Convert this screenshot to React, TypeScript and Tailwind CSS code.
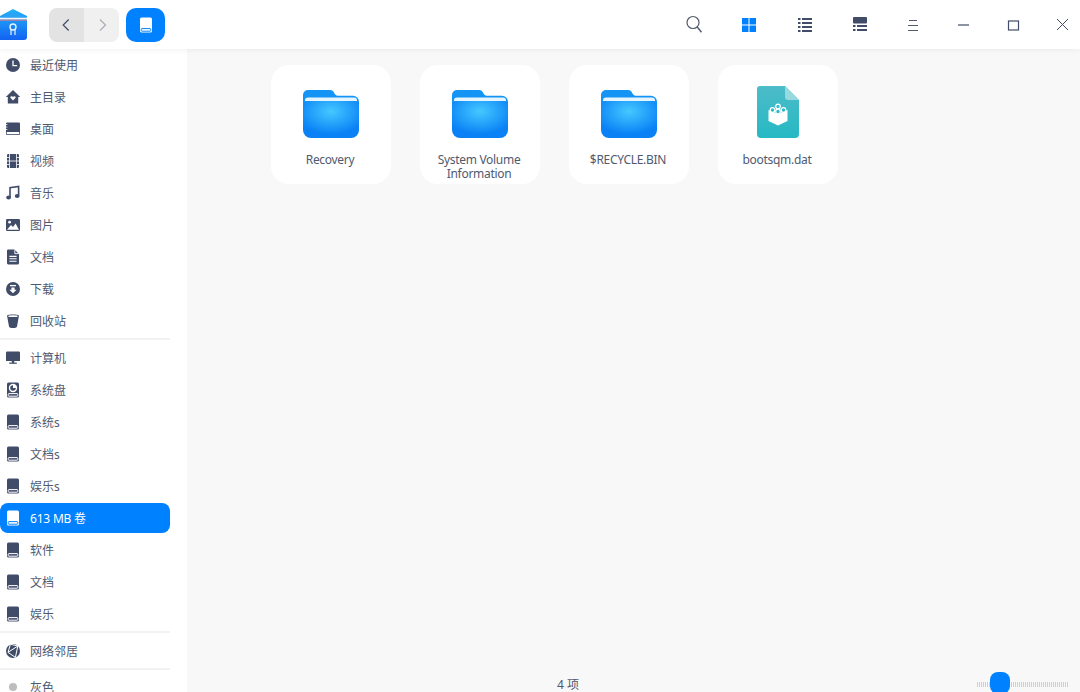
import type { ReactNode } from 'react';

const font = { fontFamily: '"Noto Sans", "Noto Sans CJK SC", sans-serif' };

function Icon({ children, className = '' }: { children: ReactNode; className?: string }) {
  return (
    <svg width="16" height="16" viewBox="0 0 16 16" className={`shrink-0 ${className}`}>
      {children}
    </svg>
  );
}

// cut = colour of the details punched out of the glyph
function DriveIcon({ fill = '#414d68', cut = '#ffffff' }: { fill?: string; cut?: string }) {
  return (
    <Icon>
      <path d="M3.5 .5h9a1.5 1.5 0 0 1 1.5 1.5v12a1.5 1.5 0 0 1-1.5 1.5h-9A1.5 1.5 0 0 1 2 14V2A1.5 1.5 0 0 1 3.5 .5z" fill={fill} />
      <rect x="3.2" y="11.6" width="9.6" height="2.6" rx=".8" fill={fill} stroke={cut} strokeWidth="1" />
    </Icon>
  );
}

const c = '#414d68';

const icons: Record<string, ReactNode> = {
  recent: (
    <Icon>
      <circle cx="8" cy="8" r="7" fill={c} />
      <path d="M8 3.6V8.6h4.2" fill="none" stroke="#fff" strokeWidth="1.3" />
    </Icon>
  ),
  home: (
    <Icon>
      <path d="M8 1 15.2 8H13.2V14.6H2.8V8H.8z" fill={c} />
      <path d="M8 11.4 5.6 9c-1-1.2.8-2.6 2.4-1.2 1.6-1.4 3.4 0 2.4 1.2z" fill="#fff" />
    </Icon>
  ),
  desktop: (
    <Icon>
      <rect x="1" y="1.5" width="14" height="12.5" rx="1" fill={c} />
      <path d="M1 3.5h1.4M1 6h1.4M1 8.5h1.4" stroke="#fff" strokeWidth=".8" />
      <rect x="1.8" y="11" width="12.4" height="2.2" fill="#fff" />
    </Icon>
  ),
  video: (
    <Icon>
      <rect x="2" y="1" width="12" height="14" rx="1.2" fill={c} />
      <path d="M4.5 1v14M11.5 1v14" stroke="#fff" strokeWidth=".8" />
      <path d="M2 4.5h2.5M2 8h2.5M2 11.5h2.5M11.5 4.5H14M11.5 8H14M11.5 11.5H14M4.5 8h7" stroke="#fff" strokeWidth=".8" />
    </Icon>
  ),
  music: (
    <Icon>
      <path d="M5 12V2.6L13.6 1.5V10.5" fill="none" stroke={c} strokeWidth="1.6" />
      <ellipse cx="3.6" cy="12.6" rx="2.4" ry="2" fill={c} />
      <ellipse cx="12.2" cy="11" rx="2.4" ry="2" fill={c} />
    </Icon>
  ),
  image: (
    <Icon>
      <rect x="1" y="2" width="14" height="12" rx="1.2" fill={c} />
      <circle cx="4.6" cy="5.2" r="1.4" fill="#fff" />
      <path d="M2 12.8 6 8l2 2 2.6-3.4 3.4 6.2z" fill="#fff" />
    </Icon>
  ),
  docs: (
    <Icon>
      <path d="M3.2 .5H9.5L14 5V14a1.5 1.5 0 0 1-1.5 1.5h-9.3A1.5 1.5 0 0 1 2 14V1.7A1.2 1.2 0 0 1 3.2 .5z" fill={c} />
      <path d="M9.8 .6V4.6H13.8" fill="none" stroke="#fff" strokeWidth=".9" />
      <path d="M4.4 7.4h7.2M4.4 9.8h7.2M4.4 12.2h7.2" stroke="#fff" strokeWidth="1.1" />
    </Icon>
  ),
  download: (
    <Icon>
      <circle cx="8" cy="8" r="7" fill={c} />
      <path d="M5 4.6h6" stroke="#fff" strokeWidth="1.3" />
      <path d="M6.4 6.6h3.2v2.2h2L8 12.2 4.4 8.8h2z" fill="#fff" />
    </Icon>
  ),
  trash: (
    <Icon>
      <path d="M2 2.6C2 1 14 1 14 2.6L12 13.4C11.6 15.6 4.4 15.6 4 13.4z" fill={c} />
      <ellipse cx="8" cy="3.2" rx="4.8" ry=".9" fill="#fff" />
    </Icon>
  ),
  computer: (
    <Icon>
      <path d="M2.2 1.5h11.6A1.2 1.2 0 0 1 15 2.7V11H1V2.7A1.2 1.2 0 0 1 2.2 1.5z" fill={c} />
      <rect x="6.8" y="11" width="2.4" height="2" fill={c} />
      <rect x="4.2" y="12.6" width="7.6" height="1.2" fill={c} />
    </Icon>
  ),
  system: (
    <Icon>
      <rect x="2" y=".5" width="12" height="15" rx="1.5" fill={c} />
      <circle cx="8" cy="6" r="4.2" fill="#fff" />
      <path d="M8 3.2a2.8 2.8 0 1 0 2.8 2.8H8z" fill={c} />
      <rect x="3.2" y="11.6" width="9.6" height="2.6" rx=".8" fill={c} stroke="#fff" strokeWidth="1" />
    </Icon>
  ),
  network: (
    <Icon>
      <circle cx="8" cy="8" r="7" fill={c} />
      <path d="M5.4 1.2 3 9.4l7.4 5M3 9.4 12.8 3 10.4 14.4M5.4 1.2 12.8 3" fill="none" stroke="#fff" strokeWidth="1" />
    </Icon>
  ),
  gray: (
    <Icon>
      <circle cx="8" cy="8" r="4" fill="#bdbdbd" />
    </Icon>
  ),
};

type Item = { label: string; icon: string; active?: boolean };

const groupOne: Item[] = [
  { label: '最近使用', icon: 'recent' },
  { label: '主目录', icon: 'home' },
  { label: '桌面', icon: 'desktop' },
  { label: '视频', icon: 'video' },
  { label: '音乐', icon: 'music' },
  { label: '图片', icon: 'image' },
  { label: '文档', icon: 'docs' },
  { label: '下载', icon: 'download' },
  { label: '回收站', icon: 'trash' },
];

const groupTwo: Item[] = [
  { label: '计算机', icon: 'computer' },
  { label: '系统盘', icon: 'system' },
  { label: '系统s', icon: 'drive' },
  { label: '文档s', icon: 'drive' },
  { label: '娱乐s', icon: 'drive' },
  { label: '613 MB 卷', icon: 'drive', active: true },
  { label: '软件', icon: 'drive' },
  { label: '文档', icon: 'drive' },
  { label: '娱乐', icon: 'drive' },
];

function SideRow({ item }: { item: Item }) {
  return (
    <div className="h-8 w-[170px] py-px">
      <div
        className={`flex h-[30px] items-center gap-[9px] rounded-lg pl-[5px] text-xs ${
          item.active ? 'bg-[#0081ff] tracking-[-0.2px] text-white' : 'text-[#4f5a70]'
        }`}
      >
        {item.icon === 'drive' ? (
          item.active ? <DriveIcon fill="#ffffff" cut="#0081ff" /> : <DriveIcon />
        ) : (
          icons[item.icon]
        )}
        <span className="pt-[2px]">{item.label}</span>
      </div>
    </div>
  );
}

function Divider() {
  return <div className="h-0.5 w-[170px] bg-[#f2f2f2]" />;
}

function Sidebar() {
  return (
    <aside className="h-full w-[187px] shrink-0 overflow-hidden bg-white">
      {groupOne.map((item) => (
        <SideRow key={item.label} item={item} />
      ))}
      <div className="mt-px mb-[2px]">
        <Divider />
      </div>
      {groupTwo.map((item) => (
        <SideRow key={item.label} item={item} />
      ))}
      <div className="mt-px mb-[2px]">
        <Divider />
      </div>
      <SideRow item={{ label: '网络邻居', icon: 'network' }} />
      <div className="my-px">
        <Divider />
      </div>
      <SideRow item={{ label: '灰色', icon: 'gray' }} />
    </aside>
  );
}

function FolderIcon({ id }: { id: string }) {
  return (
    <svg width="56" height="52" viewBox="0 0 56 52">
      <defs>
        <radialGradient id={id} cx="50%" cy="28%" r="62%">
          <stop offset="0%" stopColor="#45c8ff" />
          <stop offset="100%" stopColor="#0a82f6" />
        </radialGradient>
      </defs>
      <g transform="translate(0 4)">
        <path d="M5 0H27c2.5 0 3 1.2 4 2.6 .8 1.5 1.8 3.2 4 3.2H50a6 6 0 0 1 6 6V30H0V5a5 5 0 0 1 5-5z" fill="#1494f5" />
        <rect x="2" y="7.500" width="52" height="7" rx="3" fill="#e4f5ff" />
        <path d="M0 14c0-2 1.500-3 3-3H53c1.500 0 3 1 3 3V40a8 8 0 0 1-8 8H8a8 8 0 0 1-8-8z" fill={`url(#${id})`} />
      </g>
    </svg>
  );
}

function DatIcon() {
  return (
    <svg width="56" height="52" viewBox="0 0 56 52">
      <defs>
        <linearGradient id="dat" x1="0" y1="0" x2="0" y2="1">
          <stop offset="0%" stopColor="#4dbcc8" />
          <stop offset="100%" stopColor="#25b9c4" />
        </linearGradient>
      </defs>
      <path d="M10 0H35L49 14V48a4 4 0 0 1-4 4H11a4 4 0 0 1-4-4V3a3 3 0 0 1 3-3z" fill="url(#dat)" />
      <path d="M35 0 49 14H38a3 3 0 0 1-3-3z" fill="#98d9e0" />
      <path d="M18.500 24 28 28 37.500 24V35L28 39.500 18.500 35z" fill="#fff" />
      <circle cx="28" cy="20.500" r="2.300" fill="none" stroke="#fff" strokeWidth="1.200" />
      <circle cx="22.500" cy="24" r="2.300" fill="#2db9c5" stroke="#fff" strokeWidth="1.200" />
      <circle cx="33.500" cy="24" r="2.300" fill="#2db9c5" stroke="#fff" strokeWidth="1.200" />
      <circle cx="28" cy="25.500" r="2.300" fill="#2db9c5" stroke="#fff" strokeWidth="1.200" />
    </svg>
  );
}

const files = [
  { name: 'Recovery', kind: 'folder' },
  { name: 'System Volume Information', kind: 'folder' },
  { name: '$RECYCLE.BIN', kind: 'folder' },
  { name: 'bootsqm.dat', kind: 'dat' },
];

function FileCard({ name, kind, id }: { name: string; kind: string; id: string }) {
  return (
    <div className="flex h-[119px] w-[120px] flex-col items-center rounded-[18px] bg-white pt-[21px]">
      {kind === 'folder' ? <FolderIcon id={id} /> : <DatIcon />}
      <div className="mt-[15px] w-[100px] pr-[2px] text-center text-xs leading-[14px] tracking-[-0.3px] text-[#4f5a70]">{name}</div>
    </div>
  );
}

function ToolbarIcon({ className, children }: { className: string; children: ReactNode }) {
  return (
    <div className={`flex h-8 w-8 items-center justify-center ${className}`}>
      <svg width="20" height="20" viewBox="0 0 20 20">
        {children}
      </svg>
    </div>
  );
}

function Header() {
  return (
    <header className="relative z-10 flex h-[49px] shrink-0 items-center bg-white shadow-[0_1px_6px_rgba(0,0,0,0.06)]">
      <svg width="27" height="31" viewBox="0 0 27 31" className="mt-[-1px]">
        <defs>
          <linearGradient id="logo" x1="0" y1="0" x2="0" y2="1">
            <stop offset="0%" stopColor="#25b3f8" />
            <stop offset="100%" stopColor="#1262f2" />
          </linearGradient>
        </defs>
        <path d="M0 7 13 0 27 7V28a3 3 0 0 1-3 3H0z" fill="url(#logo)" />
        <path d="M0 8.500H27V10.500H0z" fill="#f5f5f5" />
        <path d="M13 4 27 8.500H0z" fill="#2aa4f5" />
        <path d="M0 10.500H27V12H0z" fill="#e9787c" opacity=".6" />
        <circle cx="13" cy="18" r="3" fill="none" stroke="#e6f4ff" strokeWidth="1.400" />
        <path d="M11 20v6M15 20v6" stroke="#e6f4ff" strokeWidth="1.200" />
      </svg>

      <div className="ml-[22px] flex h-[34px] w-[70px] overflow-hidden rounded-lg">
        <div className="flex w-[35px] items-center justify-center bg-[#e3e3e3]">
          <svg width="16" height="16" viewBox="0 0 16 16">
            <path d="M9.700 2.500 4.200 8l5.500 5.500" fill="none" stroke="#414d68" strokeWidth="1.200" />
          </svg>
        </div>
        <div className="flex w-[35px] items-center justify-center bg-[#f0f0f0]">
          <svg width="16" height="16" viewBox="0 0 16 16">
            <path d="M6 2.500 11.500 8 6 13.500" fill="none" stroke="#a9adb6" strokeWidth="1.200" />
          </svg>
        </div>
      </div>

      <div className="ml-[7px] flex h-[34px] w-[39px] items-center justify-center rounded-[10px] bg-[#0081ff]">
        <DriveIcon fill="#ffffff" cut="#0081ff" />
      </div>

      <div className="ml-auto mt-px flex items-center pr-px">
        <ToolbarIcon className="">
          <circle cx="9" cy="7.500" r="6" fill="none" stroke="#535b6c" strokeWidth="1.200" />
          <path d="M13.200 12 17.500 17.200" stroke="#535b6c" strokeWidth="1.400" />
        </ToolbarIcon>
        <ToolbarIcon className="ml-[23px]">
          <path d="M3 3h6.500v6.500H3zM10.500 3H17v6.500h-6.500zM3 10.500h6.500V17H3zM10.500 10.500H17V17h-6.500z" fill="#0081ff" />
        </ToolbarIcon>
        <ToolbarIcon className="ml-[24px]">
          <path d="M3 3h2.500v2H3zM7 3h10v2H7zM3 7h2.500v2H3zM7 7h10v2H7zM3 11h2.500v2H3zM7 11h10v2H7zM3 15h2.500v2H3zM7 15h10v2H7z" fill="#414d68" />
        </ToolbarIcon>
        <ToolbarIcon className="ml-[23px]">
          <rect x="3" y="2" width="14" height="6.500" rx="1" fill="#414d68" />
          <path d="M3 10h2.500v2H3zM7 10h10v2H7zM3 14h2.500v2H3zM7 14h10v2H7z" fill="#414d68" />
        </ToolbarIcon>
        <ToolbarIcon className="ml-[21px]">
          <path d="M6 5.500h8M5 10.500h10M5 15.500h10" stroke="#535b6c" strokeWidth="1" />
        </ToolbarIcon>
        <ToolbarIcon className="ml-[18px]">
          <path d="M5 10h11" stroke="#414d68" strokeWidth="1.200" />
        </ToolbarIcon>
        <ToolbarIcon className="ml-[18px]">
          <rect x="5.500" y="6" width="10" height="9" fill="none" stroke="#414d68" strokeWidth="1.200" />
        </ToolbarIcon>
        <ToolbarIcon className="ml-[18px]">
          <path d="M4 4 15 15M15 4 4 15" stroke="#414d68" strokeWidth="1" />
        </ToolbarIcon>
      </div>
    </header>
  );
}

function StatusBar() {
  return (
    <footer className="relative flex h-4 shrink-0 items-center">
      <span className="ml-[370px] pt-[2px] text-xs text-[#4f5a70]">4 项</span>
      <div className="ml-auto mr-3 h-[5px] w-[91px] bg-[repeating-linear-gradient(90deg,#cfcfcf_0_1px,transparent_1px_2px)]" />
      <div className="absolute right-[70px] top-[-4px] h-[22px] w-5 rounded-lg bg-[#0081ff]" />
    </footer>
  );
}

export default function App() {
  return (
    <div className="flex h-[692px] w-[1080px] flex-col overflow-hidden bg-white" style={font}>
      <Header />
      <div className="flex min-h-0 flex-1">
        <Sidebar />
        <main className="flex min-w-0 flex-1 flex-col bg-[#f8f8f8]">
          <div className="flex flex-1 items-start gap-[29px] pl-[84px] pt-4">
            {files.map((f, i) => (
              <FileCard key={f.name} name={f.name} kind={f.kind} id={`folder-${i}`} />
            ))}
          </div>
          <StatusBar />
        </main>
      </div>
    </div>
  );
}
